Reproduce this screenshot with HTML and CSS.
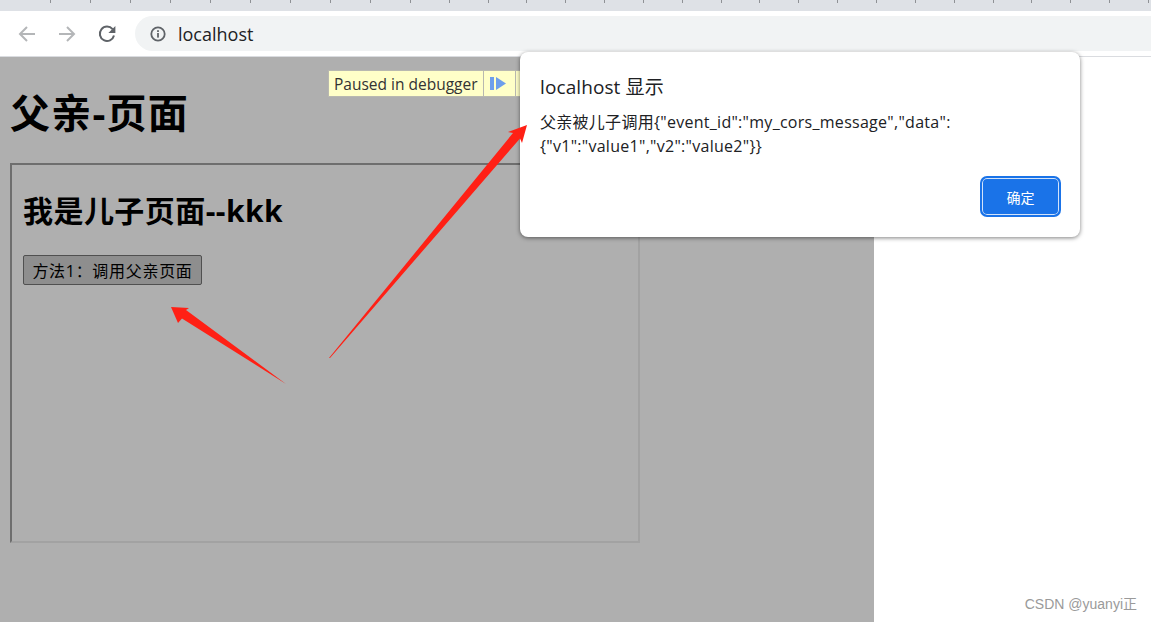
FILE: index.html
```html
<!DOCTYPE html>
<html>
<head>
  <title>localhost</title>
  <link rel="stylesheet" href="styles.css">
</head>
<body>
  <div class="tabstrip"></div>

  <div class="toolbar">
    <svg class="nav-icon" viewBox="0 0 18 18">
      <path d="M17 9H2M9 2L2 9l7 7" fill="none" stroke="#b4b6b8" stroke-width="2"/>
    </svg>
    <svg class="nav-icon" viewBox="0 0 18 18">
      <path d="M1 9h15M9 2l7 7-7 7" fill="none" stroke="#b4b6b8" stroke-width="2"/>
    </svg>
    <svg class="nav-icon" viewBox="0 0 18 18">
      <path d="M14.6 4.2A7.2 7.2 0 1 0 16 10.5" fill="none" stroke="#5f6368" stroke-width="2"/>
      <path d="M17.4 1v7h-7z" fill="#5f6368"/>
    </svg>
    <div class="omnibox">
      <svg class="info-icon" viewBox="0 0 16 16">
        <circle cx="8" cy="8" r="6.7" fill="none" stroke="#5f6368" stroke-width="1.8"/>
        <rect x="7.1" y="7" width="1.8" height="4.6" fill="#5f6368"/>
        <rect x="7.1" y="4.2" width="1.8" height="1.8" fill="#5f6368"/>
      </svg>
      <span class="url">localhost</span>
    </div>
  </div>

  <div class="viewport">
    <div class="page-dim">
      <h1>父亲-页面</h1>
      <div class="child-frame">
        <h2>我是儿子页面--kkk</h2>
        <button class="call-btn">方法1：调用父亲页面</button>
      </div>
    </div>
    <div class="page-blank"></div>
  </div>

  <!-- debugger bar -->
  <div class="paused-bar">
    <span class="paused-text">Paused in debugger</span>
    <span class="paused-btn">
      <svg width="16" height="14" viewBox="0 0 16 14">
        <rect x="0" y="0" width="4" height="13" fill="#6d9eeb"/>
        <path d="M6 0l10 6.5L6 13z" fill="#6d9eeb"/>
      </svg>
    </span>
    <span class="paused-btn"></span>
  </div>

  <div class="dialog">
    <div class="dialog-title">localhost 显示</div>
    <div class="dialog-msg">父亲被儿子调用{"event_id":"my_cors_message","data":<br>{"v1":"value1","v2":"value2"}}</div>
    <div class="dialog-actions">
      <button class="ok-btn">确定</button>
    </div>
  </div>

  <svg class="arrows" width="1151" height="622" viewBox="0 0 1151 622">
    <path d="M329 358L513 133 508 132 527 125 522 143 520 138.500 330 358z" fill="#ff2015"/>
    <path d="M286 384L182 318.500 178 323 171 307 189 308 186 310z" fill="#ff2015"/>
  </svg>

  <div class="watermark">CSDN @yuanyi正</div>
</body>
</html>
```

FILE: styles.css
```css
html, body {
  margin: 0;
  height: 100%;
  overflow: hidden;
  background: #ffffff;
}
body {
  font-family: "Open Sans", "Noto Sans CJK SC", sans-serif;
  display: flex;
  flex-direction: column;
  color: #000;
}

/* BROWSER CHROME */
.tabstrip {
  height: 11px;
  background-color: #dee1e6;
  /* the ticks are closer together right of x=371 */
  background-image:
    repeating-linear-gradient(90deg, transparent 0, transparent 10px, #8f9195 10px, #8f9195 11px, transparent 11px, transparent 40px),
    repeating-linear-gradient(90deg, transparent 0, transparent 37.850px, #8f9195 37.850px, #8f9195 38.850px);
  background-size: 335px 3px, 780px 3px;
  background-position: 40px 0, 372px 0;
  background-repeat: no-repeat;
}
.toolbar {
  height: 45px;
  display: flex;
  align-items: center;
  padding-left: 18px;
  gap: 22px;
  border-bottom: 1px solid #dadce0;
}
.nav-icon {
  width: 18px;
  height: 18px;
  flex: none;
}
.omnibox {
  flex: 1;
  height: 35px;
  margin-left: -3px;
  background: #f1f3f4;
  border-radius: 18px 0 0 18px;
  display: flex;
  align-items: center;
  padding-left: 15px;
  gap: 12px;
}
.info-icon {
  width: 16px;
  height: 16px;
}
.url {
  font-size: 18px;
  color: #202124;
}

/* PAGE */
.viewport {
  flex: 1;
  display: flex;
}
.page-dim {
  width: 874px;
  background: #afafaf;
  padding: 32px 10px 0;
  box-sizing: border-box;
}
.page-blank {
  flex: 1;
}
h1 {
  margin: 0 0 27px;
  font-size: 40px;
  line-height: 47px;
  font-weight: 700;
  letter-spacing: 1.2px;
}
.child-frame {
  width: 630px;
  height: 380px;
  box-sizing: border-box;
  border: 2px solid;
  border-color: #6e6e6e #a2a2a2 #a2a2a2 #6e6e6e;
  padding: 28px 11px 0;
}
h2 {
  margin: 0 0 26px;
  font-size: 30px;
  line-height: 36px;
  font-weight: 700;
  letter-spacing: 0.45px;
}
.call-btn {
  display: block;
  width: 179px;
  height: 30px;
  padding: 0;
  font-family: inherit;
  font-size: 16px;
  letter-spacing: 0.7px;
  background: #8e8e8e;
  color: #000;
  border: 1px solid #505050;
  border-radius: 2px;
}

/* PAUSED OVERLAY */
.paused-bar {
  position: absolute;
  left: 328px;
  top: 70px;
  height: 27px;
  display: flex;
  background: #ffffc8;
  border: 1px solid #b8b8b0;
  box-sizing: border-box;
}
.paused-text {
  width: 154px;
  box-sizing: border-box;
  padding-left: 5px;
  font-size: 15.5px;
  line-height: 26px;
  color: #333;
  white-space: nowrap;
}
.paused-btn {
  width: 32px;
  border-left: 1px solid #b8b8b0;
  display: flex;
  align-items: center;
  justify-content: center;
  padding-right: 4px;
  box-sizing: border-box;
}

/* ALERT DIALOG */
.dialog {
  position: absolute;
  left: 520px;
  top: 52px;
  width: 560px;
  height: 185px;
  box-sizing: border-box;
  background: #fff;
  border-radius: 8px;
  box-shadow: 0 1px 4px rgba(0, 0, 0, 0.5);
  padding: 21px 20px 0;
}
.dialog-title {
  font-size: 19px;
  line-height: 28px;
  letter-spacing: 0.1px;
  color: #202124;
}
.dialog-msg {
  margin-top: 9px;
  font-size: 16px;
  line-height: 24px;
  letter-spacing: 0.28px;
  color: #202124;
  white-space: nowrap;
}
.dialog-actions {
  display: flex;
  justify-content: flex-end;
  margin-top: 18px;
}
.ok-btn {
  width: 81px;
  height: 41px;
  margin-right: -1px;
  background: #1a73e8;
  color: #fff;
  border: 2px solid #1a73e8;
  box-shadow: inset 0 0 0 1px #d3e3fa;
  border-radius: 7px;
  font-family: inherit;
  font-size: 14px;
}

/* SCREENSHOT MARKUP */
.arrows {
  position: absolute;
  left: 0;
  top: 0;
  pointer-events: none;
}
.watermark {
  position: absolute;
  right: 14px;
  bottom: 9px;
  font-family: "Liberation Sans", "Noto Sans CJK SC", sans-serif;
  font-size: 14px;
  color: #9a9a9a;
}
```
